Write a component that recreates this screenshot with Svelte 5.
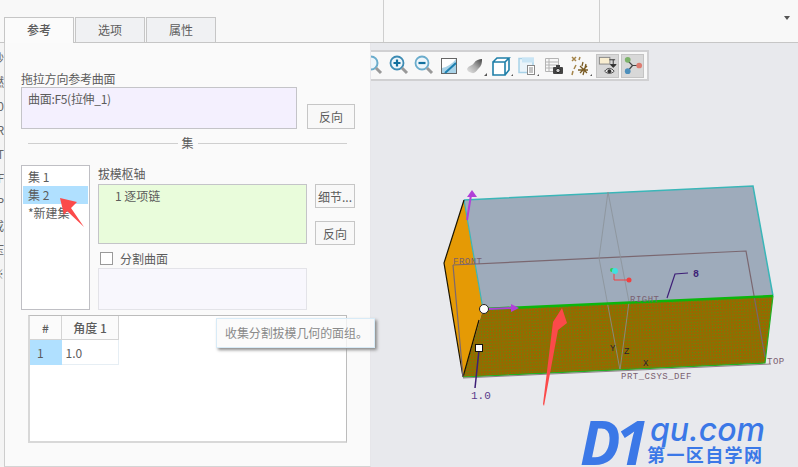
<script>
  const sideGlyphs = ['砂', '燃', '0', 'R', 'T', 'F', 'P', '或', '压', '※'];
</script>

<div class="page">
  <header class="topbar">
    <nav class="tabs">
      <span class="tab active">参考</span>
      <span class="tab">选项</span>
      <span class="tab">属性</span>
    </nav>
    <div class="cell middle"></div>
    <div class="cell last"><span class="caret"></span></div>
  </header>

  <main class="main">
    <ul class="side">
      {#each sideGlyphs as glyph}
        <li>{glyph}</li>
      {/each}
    </ul>

    <section class="panel">
      <label class="caption" for="ref">拖拉方向参考曲面</label>
      <div class="row">
        <div class="box lilac" id="ref">曲面:F5(拉伸_1)</div>
        <button class="btn wide">反向</button>
      </div>

      <div class="sep"><span>集</span></div>

      <div class="sets">
        <ul class="setlist">
          <li>集 1</li>
          <li class="sel">集 2</li>
          <li>*新建集</li>
        </ul>
        <div class="pivot">
          <div class="caption">拔模枢轴</div>
          <div class="box green"><span class="chain">1 逐项链</span></div>
          <div class="check"><i></i>分割曲面</div>
          <div class="box pale"></div>
        </div>
        <div class="side-btns">
          <button class="btn">细节...</button>
          <button class="btn">反向</button>
        </div>
      </div>

      <div class="grid-wrap">
        <table>
          <thead>
            <tr><th class="c0">#</th><th class="c1">角度 1</th><th class="rest"></th></tr>
          </thead>
          <tbody>
            <tr><td class="idx">1</td><td class="val">1.0</td><td class="rest"></td></tr>
          </tbody>
        </table>
        <div class="tooltip">收集分割拔模几何的面组。</div>
      </div>

      <svg class="arrow1" width="40" height="40" viewBox="0 0 40 40">
        <polygon points="1,1 18,5 12,11 25,30 8,14 5,18" fill="#fb4a4a" />
      </svg>
    </section>

    <section class="view">
      <div class="toolbar">
        <span class="tool">
          <svg width="24" height="24" viewBox="0 0 24 24"><circle cx="12" cy="9" r="6.500" fill="#eef6fb" stroke="#6aaccc" stroke-width="2" /><path d="M17 14l5 5" stroke="#999" stroke-width="3" /></svg>
        </span>
        <span class="tool">
          <svg width="24" height="24" viewBox="0 0 24 24"><circle cx="12" cy="9" r="6.500" fill="#eef6fb" stroke="#3d8bb3" stroke-width="1.800" /><path d="M8.500 9h7M12 5.500v7" stroke="#12709e" stroke-width="2.200" /><path d="M17 14l5 5" stroke="#999" stroke-width="3" /></svg>
        </span>
        <span class="tool">
          <svg width="24" height="24" viewBox="0 0 24 24"><circle cx="11" cy="9" r="6.500" fill="#eef6fb" stroke="#6aaccc" stroke-width="1.800" /><path d="M7.500 9h7" stroke="#12709e" stroke-width="2.200" /><path d="M16 14l5 5" stroke="#999" stroke-width="3" /></svg>
        </span>
        <span class="tool">
          <svg width="24" height="24" viewBox="0 0 24 24"><rect x="4.500" y="4.500" width="15" height="15" fill="#a9d3e8" stroke="#666" /><path d="M5 14C10 13 15 10 19 5H5z" fill="#fff" /><path d="M8 19L19 9" stroke="#1b7fb0" stroke-width="2" /></svg>
        </span>
        <span class="tool">
          <svg width="24" height="24" viewBox="0 0 24 24">
            <defs>
              <linearGradient id="blob" x1="0" y1="1" x2="1" y2="0">
                <stop offset="0" stop-color="#e8e8e8" />
                <stop offset="0.500" stop-color="#aaa" />
                <stop offset="1" stop-color="#444" />
              </linearGradient>
            </defs>
            <path d="M4 15c2-4 5-3 7-6s5-4 8-4c0 5-1 7-3 9s-4 6-7 5-5-2-5-4z" fill="url(#blob)" />
            <path d="M21 22l3-3v3z" fill="#555" />
          </svg>
        </span>
        <span class="tool">
          <svg width="24" height="24" viewBox="0 0 24 24"><path d="M4 8h12v13H4zM4 8l4-4h12l-4 4M16 21l4-5V4" fill="#fff" stroke="#1f7fa8" stroke-width="1.600" /><path d="M22 22l2-2v2z" fill="#555" /></svg>
        </span>
        <span class="tool">
          <svg width="24" height="24" viewBox="0 0 24 24"><rect x="4" y="4.500" width="14" height="14" fill="#eaf4fa" stroke="#a8d2e8" stroke-width="1.500" /><rect x="7" y="3.500" width="12" height="5" fill="#c9e5f5" /><rect x="12.500" y="11.500" width="7" height="9" fill="#fff" stroke="#888" /><path d="M14 14h4M14 16h4M14 18h4" stroke="#888" /><path d="M22 22l2-2v2z" fill="#555" /></svg>
        </span>
        <span class="tool shift">
          <svg width="24" height="24" viewBox="0 0 24 24"><path d="M3.500 4.500h13v13h-13zM3.500 8h13M3.500 11h13M3.500 14h13M7 4.500v13" fill="#f8f8f8" stroke="#b4b4b4" /><rect x="11" y="13" width="10" height="7" rx="1" fill="#444" /><rect x="14" y="11" width="4" height="3" fill="#444" /><circle cx="16" cy="16.500" r="2.200" fill="#ccc" stroke="#222" /></svg>
        </span>
        <span class="tool">
          <svg width="24" height="24" viewBox="0 0 24 24"><path d="M4 3l4 4M8 3L4 7M12 3l-1 3M8 11l-2 4M5 17l-1 4" stroke="#a5854a" stroke-width="1.500" fill="none" /><path d="M15 8l-1 4M18 10l-3 11M10 16h10M12 12l7 7M19 12l-7 7" stroke="#7a5c24" stroke-width="1.300" fill="none" /><path d="M22 22l2-2v2z" fill="#555" /></svg>
        </span>
        <span class="tool on">
          <svg width="21" height="21" viewBox="0 0 22 22"><rect x="2.500" y="2.500" width="11" height="7" fill="#f8edd0" stroke="#888" /><path d="M13 5h6M17 5v5M14 10h6l-3 3z" stroke="#333" fill="#333" /><path d="M8 17c3-4 7-4 10 0-3 3-7 3-10 0z" fill="#e8e8e8" stroke="#444" /><circle cx="13" cy="17" r="2" fill="#333" /></svg>
        </span>
        <span class="tool on">
          <svg width="21" height="21" viewBox="0 0 22 22"><path d="M6 6l5 5 7 0M11 11l-5 6" stroke="#444" stroke-width="1.300" fill="none" /><circle cx="6" cy="5" r="3" fill="#7cb26a" /><circle cx="18" cy="11" r="3" fill="#de7b70" /><circle cx="6" cy="17" r="3" fill="#4d8fbb" /></svg>
        </span>
      </div>

      <svg class="model" width="427" height="424" viewBox="371 43 427 424">
        <defs>
          <pattern id="dots" width="3" height="3" patternUnits="userSpaceOnUse" patternTransform="rotate(-2.500)">
            <rect width="3" height="3" fill="#976900" />
            <rect x="1" y="1" width="1" height="1" fill="#4a9c10" />
          </pattern>
        </defs>
        <polygon points="464,200 753,186 773,296 483,309" fill="#9eabbb" />
        <polygon points="464,200 444,263 463,377 483,309" fill="#e59a05" />
        <polygon points="483,309 773,296 765,363 463,377" fill="url(#dots)" />
        <path d="M464,200 L753,186 L773,296" stroke="#3ab6b8" stroke-width="1.500" fill="none" />
        <path d="M464,200 L483,309" stroke="#3ab6b8" stroke-width="1.200" />
        <path d="M464,200 L444,263 L463,377 L479,320" stroke="#1a1400" stroke-width="1.200" fill="none" />
        <path d="M453,265 L746,251 L765,357 M453,265 L463,377" stroke="#7a6770" stroke-width="1.200" fill="none" />
        <path d="M608,192 L599,258 L620,370 L629,302 Z" stroke="#8a9298" stroke-width="0.800" fill="none" />
        <path d="M483,309 L773,296" stroke="#0cb60c" stroke-width="2.500" />
        <path d="M463,377 L765,363 L773,296" stroke="#22b022" stroke-width="1.200" fill="none" />
        <path d="M463,378 L771,364" stroke="#7a6770" stroke-width="0.800" />
        <path d="M467,220 L471,195" stroke="#b040d8" stroke-width="2" />
        <polygon points="472,190 477,197 467,197" fill="#b040d8" />
        <path d="M488,309 L512,308" stroke="#b040d8" stroke-width="2" />
        <polygon points="519,308 511,304 511,312" fill="#b040d8" />
        <path d="M479,350 L475,388" stroke="#3d1e76" stroke-width="1.500" />
        <circle cx="484" cy="309" r="4.500" fill="#fff" stroke="#222" />
        <rect x="475.500" y="344.500" width="7" height="7" fill="#fff" stroke="#111" />
        <path d="M688,273 L675,274 L667,298" stroke="#3d1e76" stroke-width="1.200" fill="none" />
        <text x="693" y="277" class="flag">8</text>
        <path d="M614,271 V280 H629" stroke="#f04040" fill="none" />
        <circle cx="629" cy="280" r="2.500" fill="#f04040" />
        <circle cx="612" cy="270" r="2" fill="#30d050" />
        <circle cx="615" cy="271" r="3" fill="#40e0e0" />
        <text x="453" y="264" class="lbl">FRONT</text>
        <text x="630" y="302" class="lbl">RIGHT</text>
        <text x="767" y="364" class="lbl">TOP</text>
        <text x="621" y="379" class="lbl">PRT_CSYS_DEF</text>
        <text x="610" y="351" class="ax">Y</text>
        <text x="624" y="354" class="ax">Z</text>
        <text x="643" y="366" class="ax">X</text>
        <text x="471" y="399" class="val-lbl">1.0</text>
        <polygon points="562,308 567,323 558,330 544,406 543,404 553,322" fill="#fb4a4a" />
      </svg>

      <div class="brand">
        <span class="d1">D1</span>
        <div class="brand-right">
          <span class="qu">qu.com</span>
          <span class="cn">第一区自学网</span>
        </div>
      </div>
    </section>
  </main>
</div>

<style>
  :global(body) {
    margin: 0;
    overflow: hidden;
  }

  .page {
    width: 798px;
    height: 467px;
    display: flex;
    flex-direction: column;
    font-family: "Noto Sans CJK SC", "Noto Sans", sans-serif;
    font-size: 12px;
    color: #5c5c5c;
    background: #e8e9ed;
    overflow: hidden;
  }

  .topbar {
    height: 42px;
    flex: none;
    display: flex;
    background: #f8f8f8;
    border-bottom: 1px solid #c6c6c6;
    padding-left: 4px;
  }

  .tabs {
    display: flex;
    align-items: flex-end;
    gap: 1px;
    width: 379px;
  }

  .tab {
    width: 68px;
    height: 24px;
    line-height: 24px;
    text-align: center;
    background: #f0f1f3;
    border: 1px solid #c6c6c6;
    border-bottom: 0;
  }

  .tab.active {
    background: #fbfbfb;
    font-weight: 500;
    height: 25px;
    margin-bottom: -1px;
    position: relative;
    z-index: 3;
  }

  .cell {
    border-left: 1px solid #cfcfcf;
  }

  .cell.middle {
    width: 215px;
  }

  .cell.last {
    flex: 1;
    display: flex;
    justify-content: flex-end;
    align-items: flex-start;
    padding: 16px 8px 0 0;
  }

  .caret {
    border: 3.500px solid transparent;
    border-top: 4px solid #555;
    border-bottom: 0;
  }

  .main {
    flex: 1;
    display: flex;
    min-height: 0;
  }

  .side {
    width: 4px;
    margin: 0;
    padding: 3px 0 0;
    list-style: none;
    flex: none;
    overflow: hidden;
    background: #f4f4f4;
    color: #666;
  }

  .side li {
    height: 24px;
    line-height: 24px;
    display: flex;
    justify-content: flex-end;
  }

  .panel {
    width: 349px;
    flex: none;
    position: relative;
    z-index: 2;
    background: #fafafa;
    border-left: 1px solid #cdcdcd;
    border-right: 1px solid #e6e6ea;
    border-bottom: 1px solid #d4d4d4;
    padding: 28px 0 0 16px;
    height: 395px;
  }

  .caption {
    display: block;
    height: 16px;
    line-height: 16px;
    letter-spacing: -0.200px;
  }

  .row {
    display: flex;
    align-items: flex-end;
    gap: 10px;
  }

  .box {
    box-sizing: border-box;
    flex: none;
    border: 1px solid #c4c4c8;
    padding: 2px 6px;
    line-height: 18px;
  }

  .lilac {
    width: 276px;
    height: 42px;
    background: #f4f0fe;
    border-width: 1.500px;
    letter-spacing: -0.300px;
  }

  .btn {
    box-sizing: border-box;
    flex: none;
    width: 40px;
    height: 24px;
    padding: 0;
    font: inherit;
    color: #5c5c5c;
    background: #f8f8f8;
    border: 1px solid #c6c6c6;
    border-radius: 0;
  }

  .btn.wide {
    width: 48px;
    height: 25px;
  }

  .sep {
    width: 319px;
    height: 14px;
    margin: 7px 0 0 7px;
    display: flex;
    align-items: center;
    gap: 4px;
    line-height: 14px;
  }

  .sep::before,
  .sep::after {
    content: "";
    flex: 1;
    height: 1px;
    background: #cfcfcf;
  }

  .sets {
    display: flex;
    gap: 8px;
    height: 145px;
    margin-top: 15px;
  }

  .setlist {
    box-sizing: border-box;
    flex: none;
    width: 69px;
    margin: 0;
    padding: 2px 1px;
    list-style: none;
    background: #fff;
    border: 1px solid #bfbfc4;
  }

  .setlist li {
    height: 18px;
    line-height: 18px;
    padding-left: 5px;
    white-space: nowrap;
  }

  .setlist li.sel {
    background: #b0e0ff;
  }

  .pivot {
    width: 209px;
    flex: none;
    padding-top: 1px;
  }

  .green {
    height: 60px;
    margin-top: 2px;
    background: #e9fcdb;
  }

  .chain {
    padding-left: 10px;
  }

  .check {
    height: 20px;
    margin-top: 4px;
    display: flex;
    align-items: center;
    gap: 7px;
    padding-left: 2px;
  }

  .check i {
    width: 11px;
    height: 11px;
    background: #fff;
    border: 1px solid #9a9a9a;
  }

  .pale {
    height: 42px;
    background: #f8f7fd;
    border-color: #e3e3e8;
  }

  .side-btns {
    display: flex;
    flex-direction: column;
    gap: 13px;
    padding-top: 19px;
  }

  .grid-wrap {
    box-sizing: border-box;
    position: relative;
    width: 319px;
    height: 128px;
    margin: 5px 0 0 7px;
    background: #fff;
    border: 1px solid #bcbcbc;
    border-left: 2px solid #d8d8d8;
    border-bottom: 2px solid #d8d8d8;
  }

  table {
    width: 100%;
    border-collapse: collapse;
  }

  th {
    height: 23px;
    padding: 0;
    background: #fbfbfb;
    font-weight: 500;
    border-right: 1px solid #d4d4d4;
    border-bottom: 1px solid #d4d4d4;
  }

  td {
    height: 24px;
    padding: 0 4px;
    border-right: 1px solid #e6eef4;
    border-bottom: 1px solid #e6eef4;
  }

  .c0 {
    width: 31px;
  }

  .c1 {
    width: 56px;
  }

  th.rest,
  td.rest {
    border: 0;
  }

  th.rest {
    background: #fff;
  }

  td.idx {
    background: #b0e0ff;
    padding-left: 7px;
    border: 0;
  }

  .tooltip {
    position: absolute;
    left: 186px;
    top: 2px;
    box-sizing: border-box;
    width: 159px;
    height: 30px;
    line-height: 28px;
    padding-left: 8px;
    white-space: nowrap;
    color: #8a8a8a;
    letter-spacing: -0.100px;
    background: rgba(250, 250, 250, 0.8);
    border: 1px solid #d8ebf7;
    box-shadow: 2px 2px 3px #8a8a8a;
  }

  .arrow1 {
    position: absolute;
    left: 54px;
    top: 154px;
  }

  .view {
    flex: 1;
    position: relative;
    min-width: 0;
  }

  .toolbar {
    box-sizing: border-box;
    width: 278px;
    height: 31px;
    margin-top: 7px;
    display: flex;
    align-items: center;
    background: #f8f8f8;
    border: 2px solid #d0d0d2;
    border-left: 0;
  }

  .tool {
    flex: none;
    width: 26px;
    height: 24px;
    display: flex;
    align-items: center;
    justify-content: center;
  }

  .tool:first-child {
    margin-left: -13px;
  }

  .tool.shift {
    margin-left: 1px;
  }

  .tool.on {
    width: 23px;
    margin-left: 3px;
    background: #d8d8d8;
    border: 1px solid #c4c4c4;
    box-sizing: border-box;
  }

  .tool.on + .tool.on {
    margin-left: 2px;
  }

  .model {
    position: absolute;
    left: 0;
    top: 0;
  }

  .lbl {
    font: 9px "Liberation Mono", monospace;
    letter-spacing: 0.500px;
    fill: #7a6070;
  }

  .ax {
    font: 9px "Liberation Mono", monospace;
    fill: #2a2030;
  }

  .val-lbl {
    font: 11px "Liberation Mono", monospace;
    fill: #5a3a8a;
  }

  .flag {
    font: bold 10px "Liberation Mono", monospace;
    fill: #3d1e76;
  }

  .brand {
    position: absolute;
    left: 209px;
    top: 372px;
    display: flex;
    gap: 3px;
    color: #3b78e7;
  }

  .d1 {
    width: 64px;
    font: italic 700 60px/54px "Open Sans", sans-serif;
    letter-spacing: -5px;
  }

  .brand-right {
    display: flex;
    flex-direction: column;
  }

  .qu {
    font: italic 500 32px/29px "Inter", sans-serif;
    height: 29px;
    margin-left: 3px;
  }

  .cn {
    font: 700 18px/20px "Noto Sans CJK SC", sans-serif;
    letter-spacing: 1.400px;
  }
</style>
